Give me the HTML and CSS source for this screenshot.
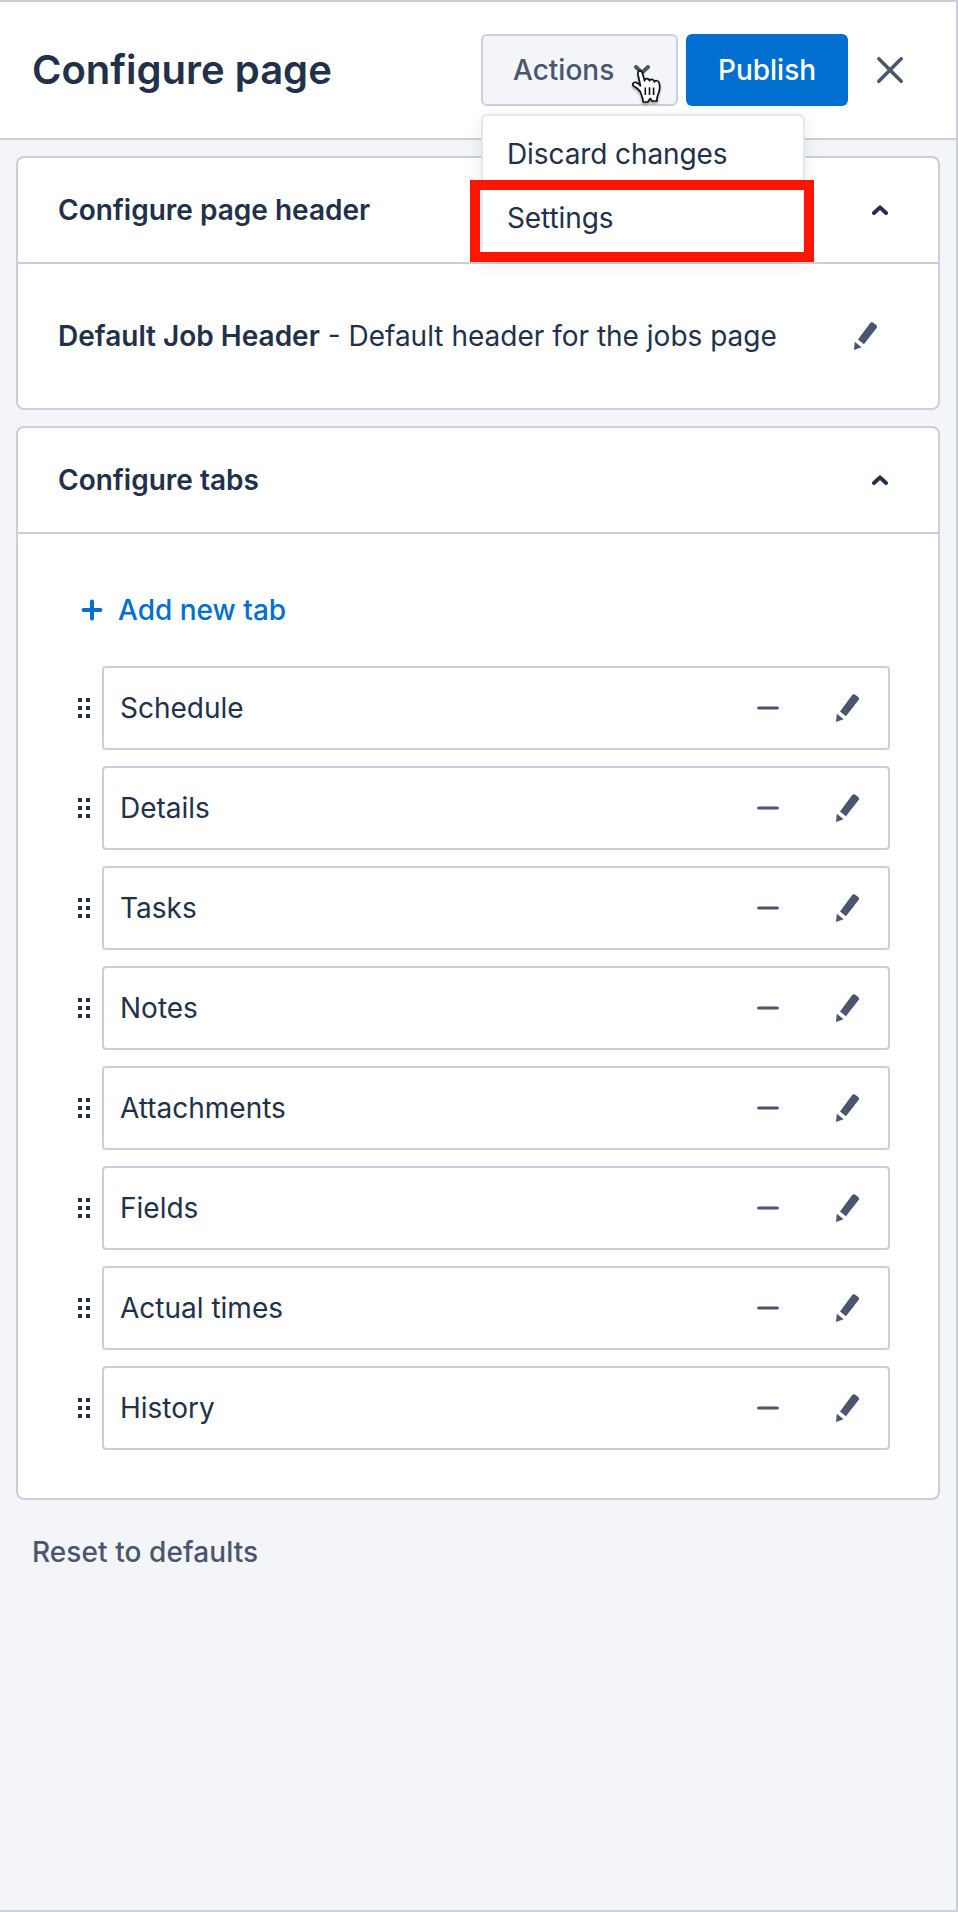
FILE: index.html
```html
<!DOCTYPE html>
<html lang="en">
<head>
    <meta charset="UTF-8">
    <meta name="viewport" content="width=device-width, initial-scale=1.0">
    <title>Configure page</title>
    <link rel="stylesheet" href="styles.css">
</head>
<body>
    <!-- Shared icons -->
    <svg class="sprite" width="0" height="0">
        <symbol id="pencil" viewBox="0 0 24 28">
            <path d="M4 17.6 15.8 1.4Q17.4-.8 19.6.9L22 2.8Q23.9 4.3 22.4 6.3L9.9 22.2Z"/>
            <path d="M.8 19.8 7.6 25.2 0 28Z"/>
        </symbol>
        <symbol id="minus" viewBox="0 0 22 4">
            <path d="M1.7 2H20.3" stroke="currentColor" stroke-width="3.2" stroke-linecap="round"/>
        </symbol>
        <symbol id="grip" viewBox="0 0 12 20">
            <path d="M0 0h4v4H0zM8 0h4v4H8zM0 8h4v4H0zM8 8h4v4H8zM0 16h4v4H0zM8 16h4v4H8z"/>
        </symbol>
        <symbol id="chevron" viewBox="0 0 16 10">
            <path d="M2 8 8 2.4 14 8" fill="none" stroke="currentColor" stroke-width="4" stroke-linecap="round" stroke-linejoin="round"/>
        </symbol>
    </svg>

    <div class="panel">
        <header class="panel-header">
            <h1>Configure page</h1>
            <div class="dropdown">
                <button class="btn btn-actions">Actions
                    <svg class="chevron down"><use href="#chevron"/></svg>
                </button>
                <ul class="menu">
                    <li>Discard changes</li>
                    <li>Settings</li>
                </ul>
                <div class="highlight"></div>
                <svg class="cursor" viewBox="0 0 32 36">
                    <path d="M9.2 22.5C7.5 19.8 5.6 18.5 3.3 17.4C.6 16 2 12.6 5 13.4C7 14 8 15.4 9.4 16.8L7 5.4C6.3 1.4 10.4.6 11.5 4.2L13.6 11.8C13.7 9 17.8 8.8 18.6 11.8C19.3 9.6 22.7 9.8 23.4 12.8C24.4 11 27.6 11.4 28.2 14C29.4 18.6 28.6 22 27 25.5C26 27.8 25.8 29.5 26 32H21L19.2 29.4L16.8 33H12.2C12 29.8 10.8 26 9.2 22.5Z" fill="#fff" stroke="#111" stroke-width="1.7" stroke-linejoin="round"/>
                    <path d="M14.3 18.4V26M18.5 18.2V26M22.6 18.4V26" stroke="#111" stroke-width="1.6"/>
                </svg>
            </div>
            <button class="btn btn-publish">Publish</button>
            <button class="btn-close" aria-label="Close">
                <svg width="28" height="28" viewBox="0 0 28 28">
                    <path d="M2.8 2.8 25.2 25.2M25.2 2.8 2.8 25.2" stroke="currentColor" stroke-width="3.6" stroke-linecap="round"/>
                </svg>
            </button>
        </header>

        <main class="content">
            <section class="card">
                <div class="card-header">
                    <h2>Configure page header</h2>
                    <svg class="chevron"><use href="#chevron"/></svg>
                </div>
                <div class="page-header">
                    <p><strong>Default Job Header</strong> - Default header for the jobs page</p>
                    <svg class="pencil"><use href="#pencil"/></svg>
                </div>
            </section>

            <section class="card">
                <div class="card-header">
                    <h2>Configure tabs</h2>
                    <svg class="chevron"><use href="#chevron"/></svg>
                </div>
                <div class="tabs">
                    <button class="add-tab">
                        <svg width="22" height="22" viewBox="0 0 22 22">
                            <path d="M11 2.6V19.4M2.6 11H19.4" stroke="currentColor" stroke-width="4" stroke-linecap="round"/>
                        </svg>
                        <span>Add new tab</span>
                    </button>
                    <ul class="tab-list">
                        <li>
                            <svg class="grip"><use href="#grip"/></svg>
                            <div class="tab"><span>Schedule</span><svg class="minus"><use href="#minus"/></svg><svg class="pencil"><use href="#pencil"/></svg></div>
                        </li>
                        <li>
                            <svg class="grip"><use href="#grip"/></svg>
                            <div class="tab"><span>Details</span><svg class="minus"><use href="#minus"/></svg><svg class="pencil"><use href="#pencil"/></svg></div>
                        </li>
                        <li>
                            <svg class="grip"><use href="#grip"/></svg>
                            <div class="tab"><span>Tasks</span><svg class="minus"><use href="#minus"/></svg><svg class="pencil"><use href="#pencil"/></svg></div>
                        </li>
                        <li>
                            <svg class="grip"><use href="#grip"/></svg>
                            <div class="tab"><span>Notes</span><svg class="minus"><use href="#minus"/></svg><svg class="pencil"><use href="#pencil"/></svg></div>
                        </li>
                        <li>
                            <svg class="grip"><use href="#grip"/></svg>
                            <div class="tab"><span>Attachments</span><svg class="minus"><use href="#minus"/></svg><svg class="pencil"><use href="#pencil"/></svg></div>
                        </li>
                        <li>
                            <svg class="grip"><use href="#grip"/></svg>
                            <div class="tab"><span>Fields</span><svg class="minus"><use href="#minus"/></svg><svg class="pencil"><use href="#pencil"/></svg></div>
                        </li>
                        <li>
                            <svg class="grip"><use href="#grip"/></svg>
                            <div class="tab"><span>Actual times</span><svg class="minus"><use href="#minus"/></svg><svg class="pencil"><use href="#pencil"/></svg></div>
                        </li>
                        <li>
                            <svg class="grip"><use href="#grip"/></svg>
                            <div class="tab"><span>History</span><svg class="minus"><use href="#minus"/></svg><svg class="pencil"><use href="#pencil"/></svg></div>
                        </li>
                    </ul>
                </div>
            </section>

            <button class="reset">Reset to defaults</button>
        </main>
    </div>
</body>
</html>
```
FILE: styles.css
```css
* {
    box-sizing: border-box;
}
body {
    margin: 0;
    font-family: Inter, sans-serif;
    font-size: 28px;
    line-height: 40px;
    color: #223049;
    background: #f3f5f9;
}
h1, h2, p, ul {
    margin: 0;
    padding: 0;
}
ul {
    list-style: none;
}
button {
    font: inherit;
    color: inherit;
    background: none;
    border: none;
    padding: 0;
    text-align: left;
}
svg {
    display: block;
    flex: none;
}
.sprite {
    position: absolute;
}
.panel {
    height: 1912px;
    border: 2px solid #cacfdb;
    border-left: none;
}

/* Header */
.panel-header {
    display: flex;
    align-items: center;
    height: 138px;
    padding: 0 52px 0 32px;
    background: #fff;
    border-bottom: 2px solid #cacfdb;
}
.panel-header h1 {
    flex: 1;
    font-size: 40px;
    font-weight: 600;
}
.btn {
    display: flex;
    align-items: center;
    height: 72px;
    border-radius: 6px;
    font-weight: 500;
}
.btn-actions {
    width: 197px;
    justify-content: space-between;
    padding: 0 26px 0 30px;
    color: #4a566d;
    background: #f3f5f9;
    border: 2px solid #cacfdb;
}
.btn-publish {
    width: 162px;
    margin-left: 8px;
    justify-content: center;
    color: #fff;
    background: #006fd0;
}
.btn-close {
    margin-left: 28px;
    color: #4a566d;
}
.dropdown {
    position: relative;
}
.menu {
    position: absolute;
    top: 80px;
    left: 0;
    width: 324px;
    padding: 6px 0;
    background: #fff;
    border: 2px solid #e4e7ee;
    border-radius: 6px;
    box-shadow: 0 6px 16px rgba(34, 48, 73, 0.1);
}
.menu li {
    height: 64px;
    padding: 12px 24px;
    letter-spacing: -0.1px;
}
.highlight {
    position: absolute;
    top: 146px;
    left: -11px;
    width: 344px;
    height: 82px;
    border: 10px solid #ff1500;
}
.cursor {
    position: absolute;
    top: 35px;
    left: 150px;
    width: 32px;
    height: 36px;
    filter: drop-shadow(0 2px 1px rgba(0, 0, 0, 0.35));
}

/* Icons */
.chevron {
    width: 16px;
    height: 10px;
}
.chevron.down {
    transform: rotate(180deg);
}
.pencil {
    width: 24px;
    height: 28px;
    color: #4a566d;
    fill: #4a566d;
}
.minus {
    width: 22px;
    height: 4px;
    color: #4a566d;
}
.grip {
    width: 12px;
    height: 20px;
    fill: #223049;
}

/* Cards */
.content {
    padding: 16px;
}
.card {
    margin-bottom: 16px;
    background: #fff;
    border: 2px solid #cacfdb;
    border-radius: 8px;
}
.card-header {
    display: flex;
    align-items: center;
    justify-content: space-between;
    height: 106px;
    padding: 0 50px 0 40px;
    border-bottom: 2px solid #cacfdb;
}
.card-header h2 {
    font-size: 28px;
    font-weight: 600;
}
.page-header {
    display: flex;
    align-items: center;
    justify-content: space-between;
    height: 144px;
    padding: 0 60px 0 40px;
}
.page-header strong {
    font-weight: 600;
}
.tabs {
    padding: 56px 48px 48px 60px;
}
.add-tab {
    display: flex;
    align-items: center;
    gap: 15px;
    height: 40px;
    margin: 0 0 36px 3px;
    color: #006fd0;
    font-weight: 500;
}
.tab-list {
    display: flex;
    flex-direction: column;
    gap: 16px;
}
.tab-list li {
    display: flex;
    align-items: center;
    gap: 12px;
}
.tab {
    flex: 1;
    display: flex;
    align-items: center;
    height: 84px;
    padding: 0 28px 0 16px;
    border: 2px solid #cacfdb;
    border-radius: 4px;
}
.tab span {
    flex: 1;
}
.tab .minus {
    margin-right: 57px;
}
.reset {
    margin: 16px 0 0 16px;
    color: #4a566d;
    font-weight: 500;
    letter-spacing: 0.08px;
}
```
